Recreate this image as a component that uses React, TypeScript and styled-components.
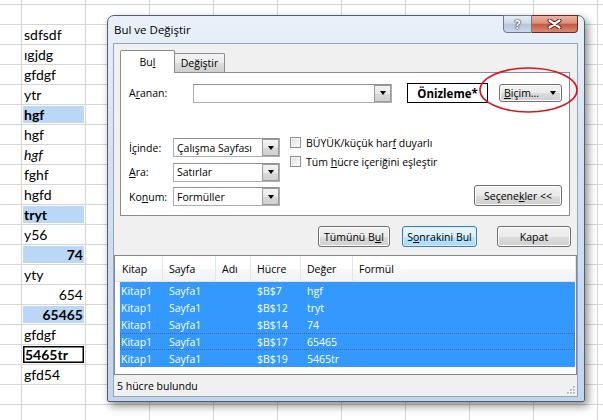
import React from "react";
import styled, { createGlobalStyle, css } from "styled-components";

const GlobalStyle = createGlobalStyle`
  html, body {
    margin: 0;
    padding: 0;
    background: #fff;
  }
  body {
    width: 603px;
    height: 420px;
    overflow: hidden;
  }
`;

const Screen = styled.div`
  position: relative;
  width: 603px;
  height: 420px;
  overflow: hidden;
  background: #fff;
`;

/* ---------- spreadsheet behind the dialog ---------- */

const Sheet = styled.div`
  display: grid;
  grid-template-columns: 22px repeat(10, 64px);
  grid-template-rows: 5px repeat(21, 20px);
  font-family: Lato, "Liberation Sans", sans-serif;
  font-size: 14px;
  color: #000;
`;

interface CellProps {
  $align?: "left" | "right";
  $found?: boolean;
  $active?: boolean;
  $italic?: boolean;
}

const Cell = styled.div<CellProps>`
  box-sizing: border-box;
  border-right: 1px solid #d6d6d6;
  border-bottom: 1px solid #d6d6d6;
  padding: 0 2px;
  display: flex;
  align-items: center;
  justify-content: ${(p) => (p.$align === "right" ? "flex-end" : "flex-start")};
  white-space: nowrap;
  overflow: hidden;
  font-weight: ${(p) => (p.$found || p.$active ? 700 : 400)};
  font-style: ${(p) => (p.$italic ? "italic" : "normal")};
  ${(p) =>
    p.$found &&
    css`
      background: #bad7f6;
      box-shadow: inset 0 0 0 1px #fff;
    `}
  ${(p) =>
    p.$active &&
    css`
      padding-left: 3px;
      box-shadow: inset 0 0 0 1px #fff, inset 0 0 0 2.5px #000;
    `}
`;

type SheetRow = { text: string; align?: "left" | "right"; found?: boolean; active?: boolean; italic?: boolean } | null;

const sheetRows: SheetRow[] = [
  null,
  { text: "sdfsdf" },
  { text: "ıgjdg" },
  { text: "gfdgf" },
  { text: "ytr" },
  { text: "hgf", found: true },
  { text: "hgf" },
  { text: "hgf", italic: true },
  { text: "fghf" },
  { text: "hgfd" },
  { text: "tryt", found: true },
  { text: "y56" },
  { text: "74", align: "right", found: true },
  { text: "yty" },
  { text: "654", align: "right" },
  { text: "65465", align: "right", found: true },
  { text: "gfdgf" },
  { text: "5465tr", active: true },
  { text: "gfd54" },
  null,
  null,
];

const COLS = 11;

/* ---------- dialog window ---------- */

const Window = styled.div`
  position: absolute;
  left: 107px;
  top: 15px;
  width: 478px;
  height: 387px;
  box-sizing: border-box;
  border: 1px solid #4f5e73;
  border-radius: 7px 7px 2px 2px;
  background: linear-gradient(180deg, #e9f0f9 0%, #d6e2f2 35%, #c3d5ec 100%);
  box-shadow: 3px 4px 9px rgba(0, 0, 0, 0.45);
  display: flex;
  flex-direction: column;
  padding: 0 6px 4px 5px;
  font-family: "Open Sans", "Noto Sans", sans-serif;
  font-size: 10.5px;
  color: #000;
`;

const TitleBar = styled.div`
  height: 27px;
  display: flex;
  align-items: flex-start;
`;

const Title = styled.div`
  flex: 1;
  font-size: 11.5px;
  padding: 6px 0 0 1px;
`;

const CaptionButtons = styled.div`
  display: flex;
  margin-top: -1px;
`;

const CaptionButton = styled.div<{ $close?: boolean }>`
  box-sizing: border-box;
  height: 18px;
  width: ${(p) => (p.$close ? 46 : 29)}px;
  display: flex;
  align-items: center;
  justify-content: center;
  border: 1px solid ${(p) => (p.$close ? "#6b2a20" : "#6c7a8e")};
  border-left: ${(p) => (p.$close ? "none" : "1px solid #6c7a8e")};
  border-radius: ${(p) => (p.$close ? "0 0 4px 0" : "0 0 0 4px")};
  background: ${(p) =>
    p.$close
      ? "linear-gradient(180deg, #e9b3a4 0%, #dc907c 45%, #c9573f 52%, #d98a72 100%)"
      : "linear-gradient(180deg, #e6edf6 0%, #cdd9e9 45%, #b5c6dd 52%, #cbd8ea 100%)"};
  color: #fff;
  font-weight: 700;
  font-size: 12px;
  text-shadow: 0 0 1px #334, 0 0 1px #334, 0 0 2px #445;
`;

const Client = styled.div`
  flex: 1;
  box-sizing: border-box;
  background: #f0f0f0;
  border: 1px solid #93a5bd;
  display: flex;
  flex-direction: column;
`;

const TabArea = styled.div`
  padding: 6px 7px 0 6px;
`;

const TabStrip = styled.div`
  display: flex;
  align-items: flex-end;
  height: 22px;
`;

const Tab = styled.div<{ $selected?: boolean; $width: number }>`
  box-sizing: border-box;
  width: ${(p) => p.$width}px;
  display: flex;
  align-items: center;
  justify-content: center;
  border: 1px solid #898c95;
  border-bottom: none;
  ${(p) =>
    p.$selected
      ? css`
          height: 23px;
          margin-bottom: -1px;
          position: relative;
          z-index: 1;
          background: #fff;
          border-radius: 2px 2px 0 0;
          padding-bottom: 1px;
        `
      : css`
          height: 19px;
          border-left: none;
          background: linear-gradient(180deg, #f3f3f3 0%, #ebebeb 50%, #dddddd 51%, #cfcfcf 100%);
          border-radius: 0 2px 0 0;
        `}
`;

const Panel = styled.div`
  box-sizing: border-box;
  height: 144px;
  border: 1px solid #898c95;
  background: #fff;
  padding: 10px 7px 10px 8px;
  display: flex;
  flex-direction: column;
`;

const SearchRow = styled.div`
  display: flex;
  align-items: center;
  height: 20px;
`;

const Label = styled.div<{ $width?: number }>`
  width: ${(p) => p.$width ?? 44}px;
  flex: none;
  display: flex;
  align-items: center;
  white-space: nowrap;
`;

const Key = styled.span`
  text-decoration: underline;
  text-underline-offset: 1px;
`;

const Combo = styled.div<{ $width: number }>`
  box-sizing: border-box;
  width: ${(p) => p.$width}px;
  height: 19px;
  display: flex;
  align-items: stretch;
  border: 1px solid #abadb3;
  border-top-color: #8e9093;
  background: #fff;
`;

const ComboText = styled.div`
  flex: 1;
  display: flex;
  align-items: center;
  padding-left: 3px;
  white-space: nowrap;
  overflow: hidden;
`;

const DropButton = styled.div`
  box-sizing: border-box;
  width: 17px;
  display: flex;
  align-items: center;
  justify-content: center;
  border: 1px solid #9a9a9a;
  background: linear-gradient(180deg, #f4f4f4 0%, #e8e8e8 50%, #d9d9d9 51%, #d0d0d0 100%);
`;

const Arrow = styled.span`
  width: 0;
  height: 0;
  border-left: 3.5px solid transparent;
  border-right: 3.5px solid transparent;
  border-top: 4px solid #000;
`;

const Preview = styled.div`
  box-sizing: border-box;
  width: 81px;
  height: 20px;
  margin-left: 15px;
  border: 1px solid #000;
  display: flex;
  align-items: center;
  justify-content: center;
  font-weight: 700;
  font-size: 11.5px;
`;

const Button = styled.div<{ $width: number; $height?: number; $focused?: boolean }>`
  box-sizing: border-box;
  width: ${(p) => p.$width}px;
  height: ${(p) => p.$height ?? 21}px;
  flex: none;
  display: flex;
  align-items: center;
  justify-content: center;
  border-radius: 3px;
  white-space: nowrap;
  ${(p) =>
    p.$focused
      ? css`
          border: 1px solid #3c7fb1;
          background: linear-gradient(180deg, #eaf6fd 0%, #d9f0fc 50%, #bee6fd 51%, #a7d9f5 100%);
          box-shadow: inset 0 0 0 1px #d5effc;
        `
      : css`
          border: 1px solid #707070;
          background: linear-gradient(180deg, #f2f2f2 0%, #ebebeb 50%, #dddddd 51%, #cfcfcf 100%);
          box-shadow: inset 0 0 0 1px #fcfcfc;
        `}
`;

const FormatButton = styled(Button)`
  margin-left: 11px;
  justify-content: space-between;
  padding: 0 5px 0 4px;
`;

const Options = styled.div`
  flex: 1;
  display: flex;
  margin-top: 35px;
`;

const OptionGrid = styled.div`
  display: grid;
  grid-template-columns: 44px 107px;
  grid-template-rows: repeat(3, 19px);
  row-gap: 5.5px;
`;

const RightColumn = styled.div`
  flex: 1;
  display: flex;
  flex-direction: column;
  margin-left: 10px;
`;

const CheckRow = styled.div`
  height: 19px;
  display: flex;
  align-items: center;
  gap: 5px;
  margin-top: -5px;

  & + & {
    margin-top: 0;
  }
`;

const CheckBox = styled.span`
  box-sizing: border-box;
  width: 11px;
  height: 11px;
  border: 1px solid #8f8f8f;
  background: linear-gradient(135deg, #dcdcdc 0%, #f4f4f4 70%, #fff 100%);
  box-shadow: inset 0 0 0 1px #f6f6f6;
`;

const MoreButton = styled(Button)`
  margin-top: auto;
  align-self: flex-end;
`;

const ActionRow = styled.div`
  display: flex;
  justify-content: flex-end;
  margin-top: 10px;
  padding-right: 6px;
  height: 21px;
`;

const ResultList = styled.div`
  box-sizing: border-box;
  height: 120px;
  margin-top: 8px;
  border: 1px solid #828790;
  background: #fff;
  display: flex;
  flex-direction: column;
`;

const HeaderRow = styled.div`
  display: grid;
  grid-template-columns: 48px 53px 35px 50px 52px 1fr;
  height: 26px;
  box-sizing: border-box;
  border-bottom: 1px solid #e0e3e8;
  background: linear-gradient(180deg, #ffffff 0%, #ffffff 50%, #f7f8fa 51%, #f2f3f5 100%);
`;

const HeaderCell = styled.div<{ $first?: boolean }>`
  box-sizing: border-box;
  display: flex;
  align-items: center;
  padding-left: ${(p) => (p.$first ? 7 : 6)}px;
  border-right: 1px solid #e3e6ea;
`;

const ResultRow = styled.div<{ $focus?: boolean }>`
  box-sizing: border-box;
  display: grid;
  grid-template-columns: 43px 53px 35px 50px 52px 1fr;
  height: 17px;
  margin: 0 1px 0 5px;
  background: #3399ff;
  color: #fff;
  border: 1px solid #3399ff;
  ${(p) =>
    p.$focus &&
    css`
      border: 1px dotted #5a6470;
    `}
`;

const ResultCell = styled.div<{ $first?: boolean }>`
  display: flex;
  align-items: center;
  padding-left: ${(p) => (p.$first ? 0 : 5)}px;
  white-space: nowrap;
`;

const StatusBar = styled.div`
  flex: 1;
  display: flex;
  align-items: center;
  justify-content: space-between;
  padding-left: 3px;
`;

const Grip = styled.svg`
  align-self: flex-end;
  margin: 0 1px 1px 0;
`;

const Annotation = styled.svg`
  position: absolute;
  left: 478px;
  top: 66px;
  overflow: visible;
  pointer-events: none;
`;

const results = [
  ["Kitap1", "Sayfa1", "", "$B$7", "hgf"],
  ["Kitap1", "Sayfa1", "", "$B$12", "tryt"],
  ["Kitap1", "Sayfa1", "", "$B$14", "74"],
  ["Kitap1", "Sayfa1", "", "$B$17", "65465"],
  ["Kitap1", "Sayfa1", "", "$B$19", "5465tr"],
];

const headers = ["Kitap", "Sayfa", "Adı", "Hücre", "Değer", "Formül"];

const DropDown: React.FC<{ width: number; value?: string }> = ({ width, value }) => (
  <Combo $width={width}>
    <ComboText>{value}</ComboText>
    <DropButton>
      <Arrow />
    </DropButton>
  </Combo>
);

const App: React.FC = () => {
  return (
    <Screen>
      <GlobalStyle />
      <Sheet>
        {Array.from({ length: COLS }).map((_, c) => (
          <Cell key={`top-${c}`} />
        ))}
        {sheetRows.map((row, r) =>
          Array.from({ length: COLS }).map((_, c) =>
            c === 1 && row ? (
              <Cell
                key={`${r}-${c}`}
                $align={row.align}
                $found={row.found}
                $active={row.active}
                $italic={row.italic}
              >
                {row.text}
              </Cell>
            ) : (
              <Cell key={`${r}-${c}`} />
            )
          )
        )}
      </Sheet>

      <Window>
        <TitleBar>
          <Title>Bul ve Değiştir</Title>
          <CaptionButtons>
            <CaptionButton>?</CaptionButton>
            <CaptionButton $close>
              <svg width="15" height="10" viewBox="0 0 15 10">
                <path d="M2.5 1.5 L12.5 8.5 M12.5 1.5 L2.5 8.5" stroke="#4a1a12" strokeWidth="4" strokeLinecap="round" />
                <path d="M2.5 1.5 L12.5 8.5 M12.5 1.5 L2.5 8.5" stroke="#fff" strokeWidth="2.2" strokeLinecap="round" />
              </svg>
            </CaptionButton>
          </CaptionButtons>
        </TitleBar>

        <Client>
          <TabArea>
            <TabStrip>
              <Tab $selected $width={55}>
                Bu<Key>l</Key>
              </Tab>
              <Tab $width={50}>
                De<Key>ğ</Key>iştir
              </Tab>
            </TabStrip>
            <Panel>
              <SearchRow>
                <Label $width={64}>
                  A<Key>r</Key>anan:
                </Label>
                <DropDown width={199} />
                <Preview>Önizleme*</Preview>
                <FormatButton $width={63} $height={18}>
                  <span>
                    <Key>B</Key>içim...
                  </span>
                  <Arrow />
                </FormatButton>
              </SearchRow>

              <Options>
                <OptionGrid>
                  <Label>
                    İ<Key>ç</Key>inde:
                  </Label>
                  <DropDown width={107} value="Çalışma Sayfası" />
                  <Label>
                    <Key>A</Key>ra:
                  </Label>
                  <DropDown width={107} value="Satırlar" />
                  <Label>
                    Ko<Key>n</Key>um:
                  </Label>
                  <DropDown width={107} value="Formüller" />
                </OptionGrid>
                <RightColumn>
                  <CheckRow>
                    <CheckBox />
                    <span>
                      BÜYÜK/küçük har<Key>f</Key> duyarlı
                    </span>
                  </CheckRow>
                  <CheckRow>
                    <CheckBox />
                    <span>
                      Tüm <Key>h</Key>ücre içeriğini eşleştir
                    </span>
                  </CheckRow>
                  <MoreButton $width={88}>
                    <span>
                      Seçene<Key>k</Key>ler &lt;&lt;
                    </span>
                  </MoreButton>
                </RightColumn>
              </Options>
            </Panel>
          </TabArea>

          <ActionRow>
            <Button $width={72} style={{ marginRight: 12 }}>
              <span>
                Tümünü B<Key>u</Key>l
              </span>
            </Button>
            <Button $width={75} $focused style={{ marginRight: 20 }}>
              <span>
                S<Key>o</Key>nrakini Bul
              </span>
            </Button>
            <Button $width={74}>Kapat</Button>
          </ActionRow>

          <ResultList>
            <HeaderRow>
              {headers.map((h, i) => (
                <HeaderCell key={h} $first={i === 0}>
                  {h}
                </HeaderCell>
              ))}
            </HeaderRow>
            {results.map((row, r) => (
              <ResultRow key={r} $focus={r === 3}>
                {row.map((v, i) => (
                  <ResultCell key={i} $first={i === 0}>
                    {v}
                  </ResultCell>
                ))}
                <ResultCell />
              </ResultRow>
            ))}
          </ResultList>

          <StatusBar>
            <span>5 hücre bulundu</span>
            <Grip width="10" height="10" viewBox="0 0 10 10">
              {[
                [8, 2],
                [8, 5],
                [5, 5],
                [8, 8],
                [5, 8],
                [2, 8],
              ].map(([x, y]) => (
                <g key={`${x}-${y}`}>
                  <rect x={x} y={y} width="1.5" height="1.5" fill="#fff" />
                  <rect x={x - 0.8} y={y - 0.8} width="1.5" height="1.5" fill="#9a9a9a" />
                </g>
              ))}
            </Grip>
          </StatusBar>
        </Client>
      </Window>

      <Annotation width={102} height={49}>
        <ellipse cx={50.5} cy={24} rx={48.5} ry={22} fill="none" stroke="#d9151b" strokeWidth={1.6} />
      </Annotation>
    </Screen>
  );
};

export default App;
